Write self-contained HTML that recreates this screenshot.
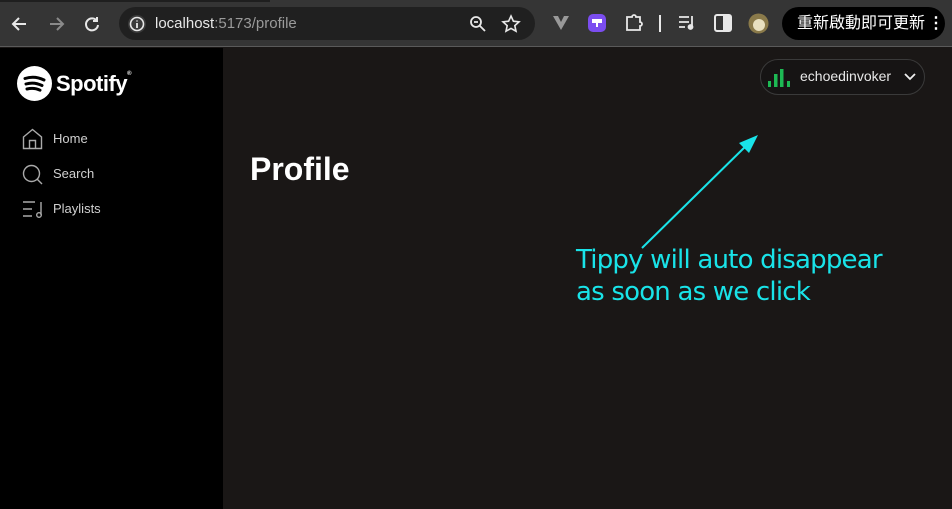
<!DOCTYPE html>
<html><head><meta charset="utf-8"><style>
*{margin:0;padding:0;box-sizing:border-box}
body{width:952px;height:509px;overflow:hidden;background:#1a1716;font-family:"Liberation Sans","Noto Sans CJK TC",sans-serif;position:relative}
.top{position:absolute;left:0;top:0;width:952px;height:47px;background:#353535;border-bottom:1px solid #5a5a5a}
.top .strip{position:absolute;left:0;top:0;width:270px;height:2px;background:#1f1f1f}
.addr{position:absolute;left:119px;top:7px;width:416px;height:33px;border-radius:17px;background:#202020}
.addr .t{position:absolute;left:36px;top:8px;font-size:15px;color:#e8e8e8}
.addr .t span{color:#9a9a9a}
.upd{position:absolute;left:782px;top:7px;width:163px;height:33px;border-radius:17px;background:#000;color:#fff;font-size:16px;line-height:33px;padding-left:15px}
.side{position:absolute;left:0;top:48px;width:223px;height:461px;background:#000}
.nav{position:absolute;left:53px;font-size:13px;color:#d0d0d0}
.user{position:absolute;left:760px;top:59px;width:165px;height:36px;border:1px solid #3a3a3a;border-radius:18px;background:#161414;color:#e8e8e8;font-size:14px}
h1{position:absolute;left:250px;top:151px;font-size:32px;color:#fff;font-weight:bold}
.note{position:absolute;left:576px;top:244px;font-size:26px;line-height:32px;color:#19e3e8;font-family:"DejaVu Sans",sans-serif;letter-spacing:-0.8px}
svg{position:absolute}
</style></head><body>
<div class="top"><div class="strip"></div>
<svg style="left:10px;top:14px" width="20" height="20" viewBox="0 0 20 20" fill="none" stroke="#e8e8e8" stroke-width="2"><path d="M16 10H4M9 4L3 10l6 6"/></svg>
<svg style="left:46px;top:14px" width="20" height="20" viewBox="0 0 20 20" fill="none" stroke="#8a8a8a" stroke-width="2"><path d="M4 10h12M11 4l6 6-6 6"/></svg>
<svg style="left:82px;top:14px" width="20" height="20" viewBox="0 0 20 20" fill="none" stroke="#e8e8e8" stroke-width="2"><path d="M15 7a6 6 0 1 0 1 4M15 3v4h-4"/></svg>
<div class="addr">
<svg style="left:8px;top:7px" width="20" height="20" viewBox="0 0 20 20"><circle cx="10" cy="10" r="9" fill="#3a3a3a"/><circle cx="10" cy="10" r="6.5" fill="none" stroke="#e8e8e8" stroke-width="1.6"/><path d="M10 9v5M10 6.5v1" stroke="#e8e8e8" stroke-width="1.8"/></svg>
<div class="t">localhost<span>:5173/profile</span></div>
<svg style="left:350px;top:8px" width="18" height="18" viewBox="0 0 18 18" fill="none" stroke="#e8e8e8" stroke-width="1.8"><circle cx="7" cy="7" r="5"/><path d="M11 11l5 5M5 7h4"/></svg>
<svg style="left:382px;top:7px" width="20" height="20" viewBox="0 0 20 20" fill="none" stroke="#e8e8e8" stroke-width="1.6"><path d="M10 2l2.4 5.2 5.6.6-4.2 3.8 1.2 5.6L10 14.4 5 17.2l1.2-5.6L2 7.8l5.6-.6z"/></svg>
</div>
<svg style="left:552px;top:15px" width="18" height="16" viewBox="0 0 18 16"><path d="M1 1h5l3 6 3-6h5l-8 14z" fill="#999"/></svg>
<svg style="left:588px;top:14px" width="18" height="18" viewBox="0 0 18 18"><rect width="18" height="18" rx="5" fill="#7b4df0"/><path d="M4 5h10v4h-4v4H8V9H4z" fill="#fff"/></svg>
<svg style="left:624px;top:13px" width="20" height="20" viewBox="0 0 20 20" fill="none" stroke="#e8e8e8" stroke-width="1.8"><path d="M3 4h5a2 2 0 0 1 4 0h4v5a2 2 0 0 1 0 4v4H3z"/></svg>
<div style="position:absolute;left:659px;top:15px;width:2px;height:17px;background:#e8e8e8"></div>
<svg style="left:678px;top:14px" width="20" height="18" viewBox="0 0 20 18" fill="none" stroke="#e8e8e8" stroke-width="1.8"><path d="M1 3h10M1 8h10M1 13h6M14 2v11"/><circle cx="12.5" cy="13" r="2" fill="#e8e8e8"/></svg>
<svg style="left:714px;top:14px" width="18" height="18" viewBox="0 0 18 18"><rect x="1" y="1" width="16" height="16" rx="2" fill="none" stroke="#e8e8e8" stroke-width="2"/><rect x="9" y="1" width="8" height="16" fill="#e8e8e8"/></svg>
<svg style="left:748px;top:13px" width="21" height="21"><circle cx="10.5" cy="10.5" r="10" fill="#8a7a4a"/><circle cx="11" cy="12" r="6" fill="#e8e0c0"/></svg>
<div class="upd">重新啟動即可更新 <span style="position:absolute;left:146px;top:0;font-weight:bold">⋮</span></div>
</div>
<div class="side">
<svg style="left:17px;top:18px" width="35" height="35" viewBox="0 0 35 35"><circle cx="17.5" cy="17.5" r="17.5" fill="#fff"/><path d="M8 12.5c6-2 13-1.5 19 1.5M9 18c5-1.5 11-1 16 1.5M10 23c4-1 9-.8 13 1.2" stroke="#000" stroke-width="3" fill="none" stroke-linecap="round"/></svg>
<div style="position:absolute;left:56px;top:23px;font-size:22px;font-weight:bold;color:#fff;letter-spacing:-0.5px">Spotify<span style="font-size:6px;vertical-align:top">®</span></div>
<svg style="left:22px;top:80px" width="21" height="22" viewBox="0 0 21 22" fill="none" stroke="#aaa" stroke-width="1.4"><path d="M1.5 9L10.5 1.5 19.5 9v11.5h-18zM7.5 20.5v-8h6v8"/></svg>
<div class="nav" style="top:83px">Home</div>
<svg style="left:22px;top:116px" width="22" height="22" viewBox="0 0 22 22" fill="none" stroke="#aaa" stroke-width="1.4"><circle cx="9.5" cy="9.5" r="8"/><path d="M15 15l5 5"/></svg>
<div class="nav" style="top:118px">Search</div>
<svg style="left:22px;top:152px" width="22" height="18" viewBox="0 0 22 18" fill="none" stroke="#aaa" stroke-width="1.4"><path d="M1 2h12M1 9h9M1 16h9M19 2v13"/><circle cx="17" cy="15" r="2.3"/></svg>
<div class="nav" style="top:153px">Playlists</div>
</div>
<div class="user">
<svg style="left:6px;top:9px" width="24" height="20" viewBox="0 0 24 20" fill="#1db954"><rect x="1" y="12" width="3" height="6"/><rect x="7" y="5" width="3.5" height="13"/><rect x="13" y="0" width="3.5" height="18"/><rect x="20" y="12" width="3" height="6"/></svg>
<span style="position:absolute;left:39px;top:8px">echoedinvoker</span>
<svg style="left:142px;top:12px" width="14" height="10" viewBox="0 0 14 10" fill="none" stroke="#eee" stroke-width="1.8"><path d="M2 2l5 5 5-5"/></svg>
</div>
<h1>Profile</h1>
<svg style="left:638px;top:132px" width="124" height="118" viewBox="0 0 124 118"><path d="M4 116L112 10" stroke="#19e3e8" stroke-width="2"/><path d="M120 3L101 11l10 10z" fill="#19e3e8"/></svg>
<div class="note">Tippy will auto disappear<br>as soon as we click</div>
</body></html>
